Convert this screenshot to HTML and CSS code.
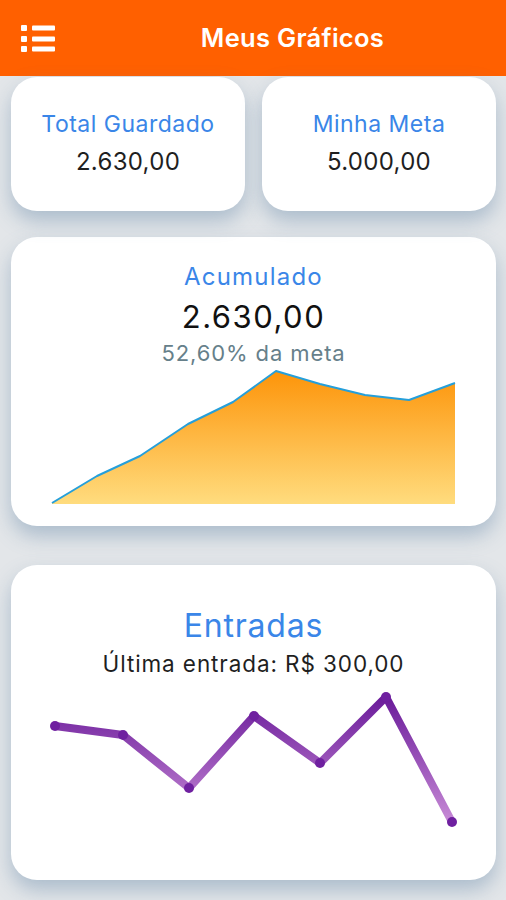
FILE: index.html
```html
<!DOCTYPE html>
<html lang="pt-BR">
<head>
    <meta charset="UTF-8">
    <meta name="viewport" content="width=device-width, initial-scale=1.0">
    <title>Meus Gráficos</title>
    <link rel="stylesheet" href="styles.css">
</head>
<body>
    <header class="topbar">
        <svg class="menu-icon" width="34" height="27" viewBox="0 0 34 27">
            <rect x="0" y="0" width="6" height="6" rx="1" fill="#fff"/>
            <rect x="0" y="11" width="6" height="6" rx="1" fill="#fff"/>
            <rect x="0" y="21" width="6" height="6" rx="1" fill="#fff"/>
            <rect x="11" y="0.5" width="23" height="5" rx="1" fill="#fff"/>
            <rect x="11" y="11.5" width="23" height="5" rx="1" fill="#fff"/>
            <rect x="11" y="21.5" width="23" height="5" rx="1" fill="#fff"/>
        </svg>
        <h1 class="title">Meus Gráficos</h1>
    </header>

    <main class="content">
        <div class="summary">
            <div class="card small-card">
                <span class="label">Total Guardado</span>
                <span class="value">2.630,00</span>
            </div>
            <div class="card small-card">
                <span class="label">Minha Meta</span>
                <span class="value">5.000,00</span>
            </div>
        </div>

        <div class="card chart-card acumulado">
            <span class="label big-label">Acumulado</span>
            <span class="big-value">2.630,00</span>
            <span class="percent">52,60% da meta</span>
            <svg class="area-chart" width="406" height="136" viewBox="51 369 406 136">
                <defs>
                    <linearGradient id="areaFill" x1="0" y1="371" x2="0" y2="504" gradientUnits="userSpaceOnUse">
                        <stop offset="0" stop-color="#fd9409"/>
                        <stop offset="1" stop-color="#ffdc7e"/>
                    </linearGradient>
                </defs>
                <path d="M52 503 L97 476 L140 456 L188 424 L233 402 L276 371 L320 384 L365 395 L409 400 L455 383 L455 504 L52 504 Z" fill="url(#areaFill)"/>
                <path d="M52 503 L97 476 L140 456 L188 424 L233 402 L276 371 L320 384 L365 395 L409 400 L455 383" fill="none" stroke="#259fda" stroke-width="2" stroke-linejoin="round"/>
            </svg>
        </div>

        <div class="card chart-card entradas">
            <span class="label huge-label">Entradas</span>
            <span class="last">Última entrada: R$ 300,00</span>
            <svg class="line-chart" width="418" height="144" viewBox="44 688 418 144">
                <defs>
                    <linearGradient id="lineFill" x1="0" y1="697" x2="0" y2="822" gradientUnits="userSpaceOnUse">
                        <stop offset="0" stop-color="#6a1b9a"/>
                        <stop offset="1" stop-color="#c78ad6"/>
                    </linearGradient>
                </defs>
                <polyline points="54,726 122,735 188,788 253,716 319,763 385,697 451,822" fill="none" stroke="url(#lineFill)" stroke-width="8" stroke-linejoin="round" stroke-linecap="round"/>
                <g fill="#6f20a0">
                    <circle cx="54" cy="726" r="5"/>
                    <circle cx="122" cy="735" r="5"/>
                    <circle cx="188" cy="788" r="5"/>
                    <circle cx="253" cy="716" r="5"/>
                    <circle cx="319" cy="763" r="5"/>
                    <circle cx="385" cy="697" r="5"/>
                    <circle cx="451" cy="822" r="5"/>
                </g>
            </svg>
        </div>
    </main>
</body>
</html>
```

FILE: styles.css
```css
*{
    margin: 0;
    padding: 0;
    box-sizing: border-box;
}
body{
    width: 506px;
    height: 900px;
    overflow: hidden;
    background-color: #e3e6e9;
    font-family: Inter, "Noto Sans", sans-serif;
}
.topbar{
    height: 76px;
    background-color: #ff6000;
    display: flex;
    align-items: center;
    padding-left: 21px;
}
.menu-icon{
    display: block;
}
.title{
    flex: 1;
    text-align: center;
    color: #fff;
    font-size: 25.5px;
    line-height: 30px;
    font-weight: 600;
    margin-left: 88px;
    margin-right: 64px;
    letter-spacing: 0.3px;
}
.content{
    padding: 1px 10px 0 11px;
}
.summary{
    display: flex;
    gap: 17px;
}
.card{
    background-color: #fff;
    border-radius: 26px;
    box-shadow: 0 10px 20px rgba(95, 130, 165, 0.42);
    display: flex;
    flex-direction: column;
    align-items: center;
}
.small-card{
    width: 234px;
    height: 134px;
    justify-content: center;
    padding-bottom: 2px;
}
.label{
    color: #3a86e8;
    font-size: 23px;
    line-height: 28px;
    letter-spacing: 0.5px;
}
.value{
    color: #1f1f1f;
    font-size: 24px;
    line-height: 28px;
    letter-spacing: 0.3px;
    margin-top: 10.5px;
}
.chart-card{
    width: 485px;
}
.acumulado{
    margin-top: 26px;
    height: 289px;
    padding-top: 26px;
}
.big-label{
    font-size: 24px;
    letter-spacing: 1.2px;
}
.big-value{
    color: #111;
    font-size: 31px;
    line-height: 36px;
    letter-spacing: 1.5px;
    margin-top: 7.5px;
}
.percent{
    color: #66808a;
    font-size: 22px;
    line-height: 26px;
    letter-spacing: 0.9px;
    margin-top: 5.5px;
}
.area-chart{
    display: block;
    margin-top: 3px;
}
.entradas{
    margin-top: 39px;
    height: 315px;
    padding-top: 42px;
}
.huge-label{
    font-size: 32px;
    line-height: 38px;
    letter-spacing: 0.8px;
}
.last{
    color: #1f1f1f;
    font-size: 22.5px;
    line-height: 28px;
    letter-spacing: 0.9px;
    margin-top: 5px;
}
.line-chart{
    display: block;
    margin-top: 10px;
}
```
